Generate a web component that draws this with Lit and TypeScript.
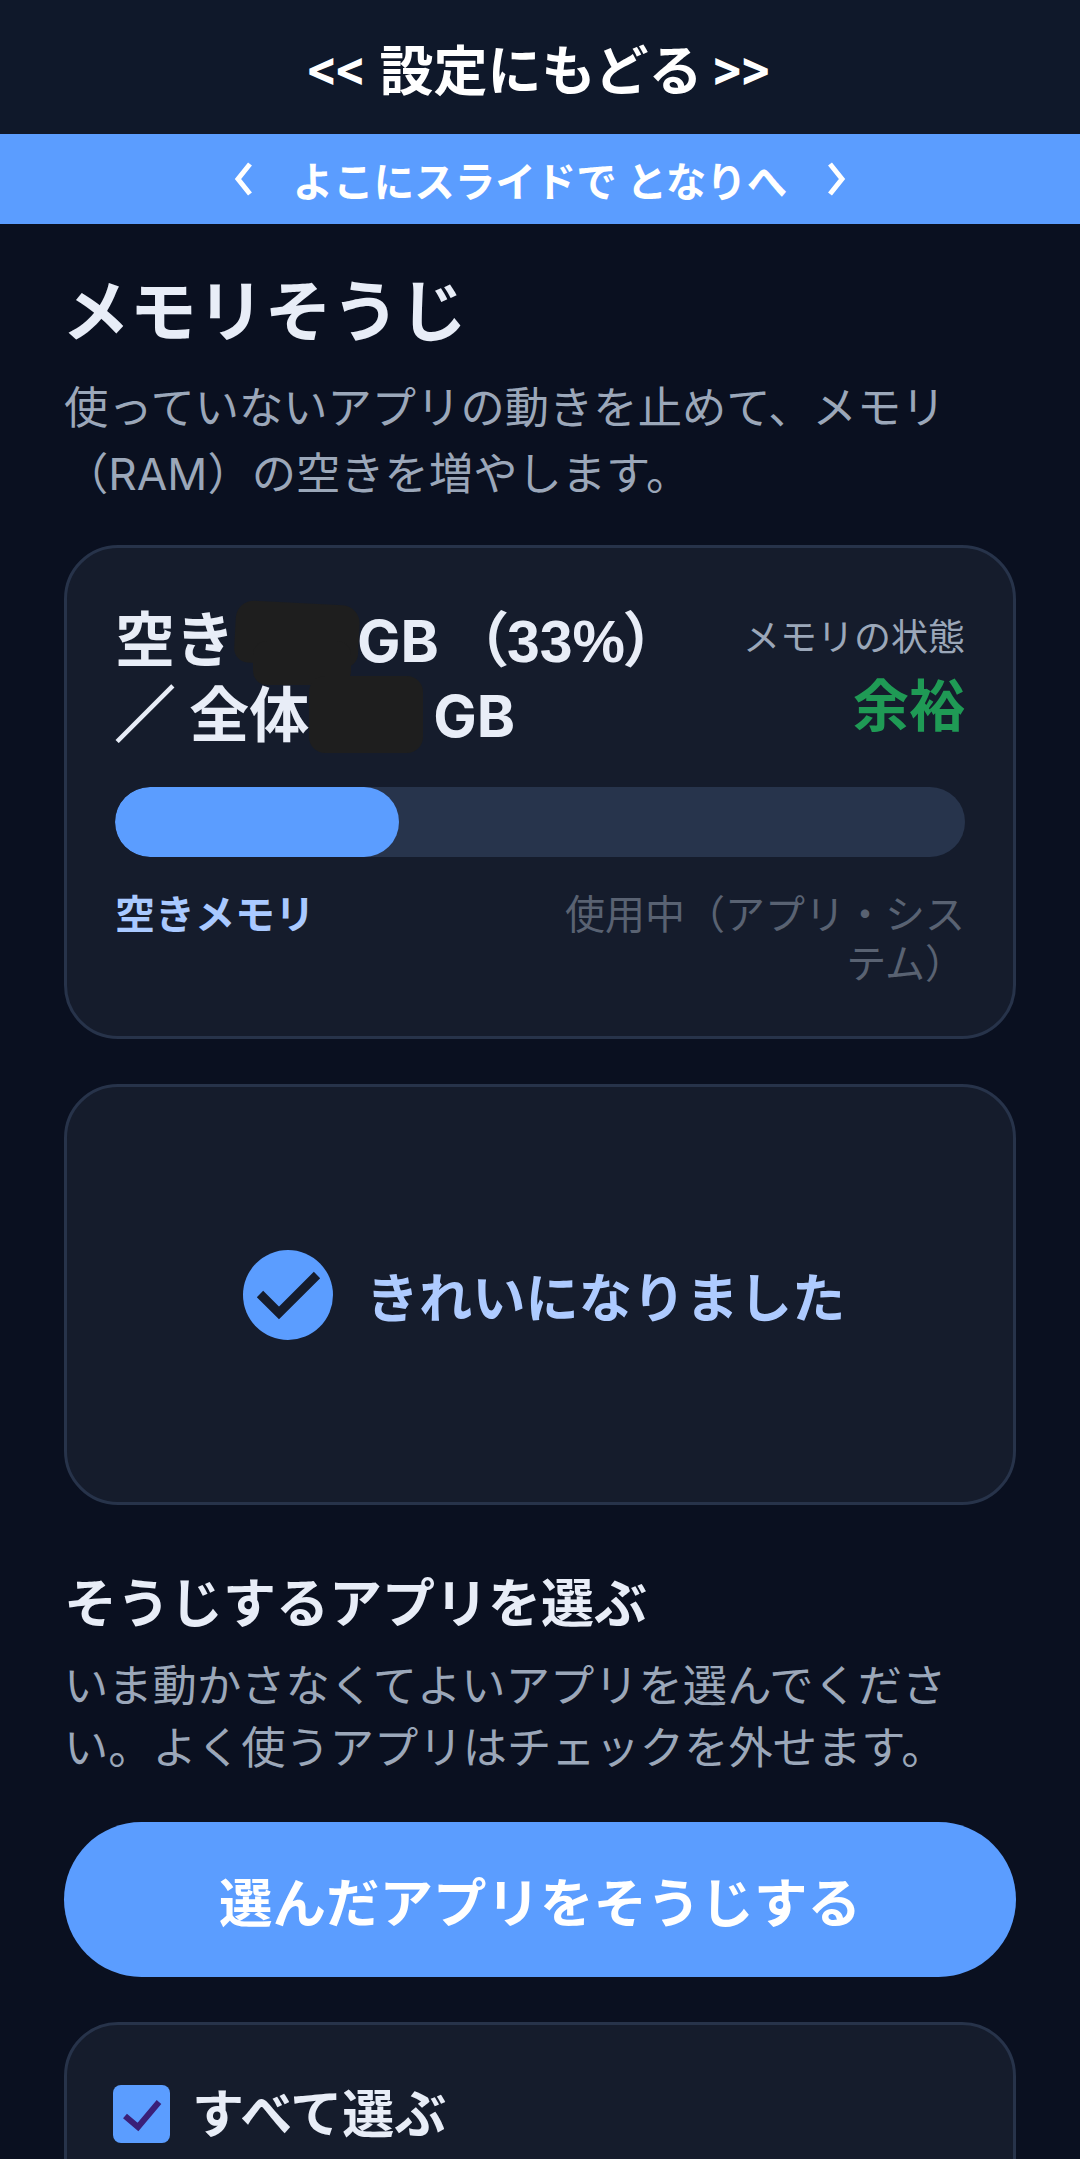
import { LitElement, html, css } from "lit";
import { customElement } from "lit/decorators.js";

@customElement("app-root")
export class AppRoot extends LitElement {
  static styles = css`
    :host {
      display: block;
      width: 1080px;
      height: 2159px;
      overflow: hidden;
      background: #0a1020;
      font-family: Inter, "Noto Sans CJK JP", sans-serif;
      color: #e8edf7;
    }
    .top {
      height: 134px;
      box-sizing: border-box;
      padding-right: 7px;
      background: #0f182a;
      display: flex;
      align-items: center;
      justify-content: center;
      font-size: 54px;
      font-weight: 700;
      color: #fff;
    }
    .arrows { font-size: 48px; letter-spacing: -4px; }
    .arrows.l { margin-right: 17px; }
    .arrows.r { margin-left: 8px; }
    .band {
      height: 90px;
      background: #5b9dff;
      display: flex;
      align-items: center;
      justify-content: center;
      gap: 40px;
      color: #fff;
      font-size: 40.5px;
      font-weight: 700;
    }
    .band svg { width: 20px; height: 34px; display: block; }
    main { padding: 44px 64px 0; display: flex; flex-direction: column; }
    h1 { margin: -1px 0 1px -2px; font-size: 67.5px; line-height: 90px; font-weight: 700; }
    .lead { margin: 17px 0 0; font-size: 44.3px; line-height: 66px; color: #9ba7b9; }
    .card {
      background: #151c2c;
      border: 3px solid #27334a;
      border-radius: 54px;
      box-sizing: border-box;
    }
    .status { margin-top: 38px; height: 494px; padding: 52px 48px 0; }
    .stat-row { display: flex; justify-content: space-between; align-items: flex-start; }
    .amount { font-size: 60px; line-height: 73px; font-weight: 700; white-space: nowrap; margin-top: 4px; }
    .lat { font-size: 58px; }
    .pct { font-family: "Liberation Sans", sans-serif; font-size: 59px; }
    .slash { -webkit-text-stroke: 1.5px #e8edf7; }
    .paren { font-feature-settings: "palt"; }
    .open { margin-left: 38px; }
    .redact { display: inline-block; position: relative; height: 1px; }
    .redact::before, .redact::after { content: ""; position: absolute; background: #1e1e1e; }
    .r1 { width: 122px; }
    .r1::before { left: 0; top: -58px; width: 124px; height: 62px; border-radius: 18px 18px 14px 14px; transform: rotate(3deg); }
    .r1::after { left: 18px; top: -20px; width: 98px; height: 44px; border-radius: 14px; }
    .r2 { width: 124px; }
    .r2::before { left: 0; top: -60px; width: 114px; height: 77px; border-radius: 16px; }
    .state { text-align: right; }
    .state-label { font-size: 37px; line-height: 50px; color: #9ba7b9; margin-top: 13px; }
    .state-value { font-size: 56px; line-height: 72px; font-weight: 700; color: #1f9a55; margin-top: 7px; }
    .track { margin-top: 34px; height: 70px; border-radius: 35px; background: #27344c; overflow: hidden; }
    .fill { height: 100%; border-radius: 35px; background: #5b9dff; }
    .labels { display: flex; justify-content: space-between; align-items: flex-start; margin-top: 33px; font-size: 40px; line-height: 49px; }
    .free { font-weight: 700; color: #a9c9ff; }
    .used { width: 420px; text-align: right; color: #596272; }
    .done {
      margin-top: 45px;
      height: 421px;
      padding-left: 8px;
      display: flex;
      align-items: center;
      justify-content: center;
      gap: 33px;
      font-size: 53.3px;
      font-weight: 700;
      color: #aecbff;
    }
    .done svg { width: 90px; height: 90px; display: block; }
    h2 { margin: 66px 0 0; font-size: 53px; line-height: 66px; font-weight: 700; }
    .hint { margin: 18px 0 0; font-size: 44.3px; line-height: 62px; color: #9ba7b9; }
    .go {
      margin-top: 43px;
      height: 155px;
      border-radius: 78px;
      background: #5b9dff;
      color: #fff;
      display: flex;
      align-items: center;
      justify-content: center;
      font-size: 53.5px;
      font-weight: 700;
    }
    .apps { margin-top: 45px; height: 300px; padding: 56px 46px; }
    .all { display: flex; align-items: center; gap: 22px; font-size: 52px; line-height: 62px; font-weight: 700; }
    .all-label { margin-top: 3px; }
    .box { width: 57px; height: 58px; border-radius: 8px; background: #5b9dff; display: block; }
    .box svg { width: 57px; height: 58px; display: block; }
  `;

  render() {
    return html`
      <div class="top"><span class="arrows l">&lt;&lt;</span><span>設定にもどる</span><span class="arrows r">&gt;&gt;</span></div>
      <div class="band">
        <svg viewBox="0 0 20 34" fill="none" stroke="#fff" stroke-width="5"><path d="M17 2 5 17l12 15"/></svg>
        <span>よこにスライドで となりへ</span>
        <svg viewBox="0 0 20 34" fill="none" stroke="#fff" stroke-width="5"><path d="M3 2l12 15L3 32"/></svg>
      </div>
      <main>
        <h1>メモリそうじ</h1>
        <p class="lead">使っていないアプリの動きを止めて、メモリ（RAM）の空きを増やします。</p>
        <section class="card status">
          <div class="stat-row">
            <div class="amount">空き<span class="redact r1"></span><span class="lat">GB</span><span class="paren open">（</span><span class="pct">33%</span><span class="paren">）</span><br /><span class="slash">／</span> 全体<span class="redact r2"></span><span class="lat">GB</span></div>
            <div class="state">
              <div class="state-label">メモリの状態</div>
              <div class="state-value">余裕</div>
            </div>
          </div>
          <div class="track"><div class="fill" style="width:33.4%"></div></div>
          <div class="labels">
            <span class="free">空きメモリ</span>
            <span class="used">使用中（アプリ・システム）</span>
          </div>
        </section>
        <section class="card done">
          <svg viewBox="0 0 90 90"><circle cx="45" cy="45" r="45" fill="#5b9dff"/><path d="M17 44l19 19 38-38" fill="none" stroke="#151c2c" stroke-width="9"/></svg>
          <span>きれいになりました</span>
        </section>
        <h2>そうじするアプリを選ぶ</h2>
        <p class="hint">いま動かさなくてよいアプリを選んでください。よく使うアプリはチェックを外せます。</p>
        <div class="go">選んだアプリをそうじする</div>
        <section class="card apps">
          <div class="all">
            <span class="box"><svg viewBox="0 0 57 58"><path d="M12 31l13 11 21-25" fill="none" stroke="#3a1f78" stroke-width="6"/></svg></span>
            <span class="all-label">すべて選ぶ</span>
          </div>
        </section>
      </main>
    `;
  }
}
